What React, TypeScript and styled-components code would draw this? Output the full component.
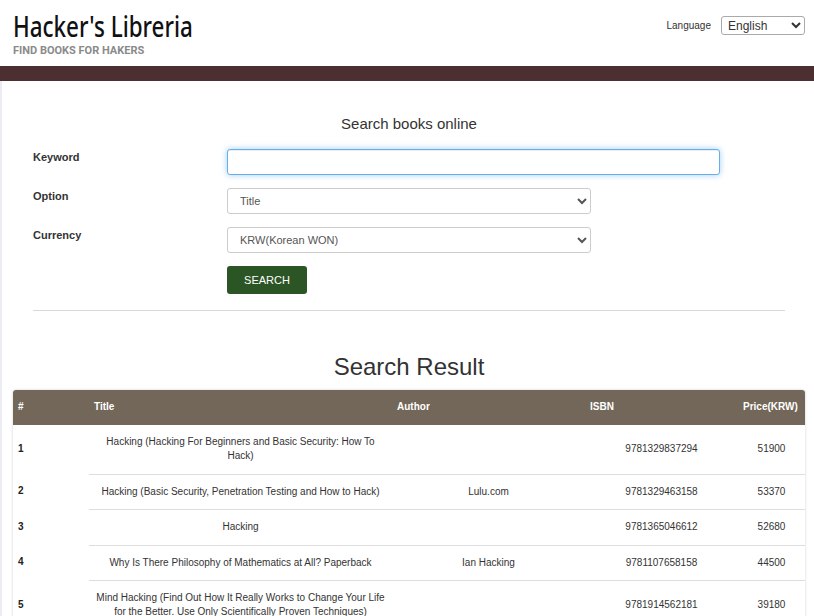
import React from "react";
import styled, { createGlobalStyle } from "styled-components";

const GlobalStyle = createGlobalStyle`
  html, body {
    margin: 0;
    padding: 0;
    background: #ffffff;
  }
  body {
    font-family: "Liberation Sans", Arial, sans-serif;
    color: #333333;
  }
  * {
    box-sizing: border-box;
  }
`;

interface Book {
  title: string;
  author: string;
  isbn: string;
  price: string;
}

const books: Book[] = [
  {
    title: "Hacking (Hacking For Beginners and Basic Security: How To Hack)",
    author: "",
    isbn: "9781329837294",
    price: "51900",
  },
  {
    title: "Hacking (Basic Security, Penetration Testing and How to Hack)",
    author: "Lulu.com",
    isbn: "9781329463158",
    price: "53370",
  },
  { title: "Hacking", author: "", isbn: "9781365046612", price: "52680" },
  {
    title: "Why Is There Philosophy of Mathematics at All? Paperback",
    author: "Ian Hacking",
    isbn: "9781107658158",
    price: "44500",
  },
  {
    title:
      "Mind Hacking (Find Out How It Really Works to Change Your Life for the Better. Use Only Scientifically Proven Techniques)",
    author: "",
    isbn: "9781914562181",
    price: "39180",
  },
];

const Header = styled.header`
  height: 66px;
  padding: 11px 9px 0 13px;
  display: flex;
  justify-content: space-between;
  align-items: flex-start;
`;

const Brand = styled.div`
  display: flex;
  flex-direction: column;
  align-items: flex-start;
`;

// the original face is a condensed sans; squeeze Noto Sans to its width
const Logo = styled.h1`
  margin: 0;
  display: inline-block;
  font-family: "Noto Sans", sans-serif;
  font-size: 28px;
  font-weight: 500;
  line-height: 30px;
  color: #111111;
  transform: scaleX(0.8);
  transform-origin: left center;
`;

const Tagline = styled.div`
  font-family: Roboto, "Liberation Sans", sans-serif;
  font-size: 11px;
  font-weight: 700;
  color: #8a8a8a;
  margin-top: 3px;
`;

const LangBox = styled.div`
  display: flex;
  align-items: center;
  gap: 10px;
  margin-top: 5px;
`;

const LangLabel = styled.span`
  font-size: 10px;
  color: #333333;
`;

const LangSelect = styled.select`
  width: 84px;
  height: 19px;
  font-family: "Liberation Sans", Arial, sans-serif;
  font-size: 12px;
  color: #333333;
  background: #ffffff;
  border: 1px solid #aaaaaa;
  border-radius: 3px;
  padding: 0 2px;
`;

const Bar = styled.div`
  height: 15px;
  background: #4b2f31;
`;

const Main = styled.main`
  border-left: 2px solid #ececf3;
  padding: 33px 9px 40px 11px;
`;

const SearchSection = styled.section`
  padding: 0 20px;
`;

const SectionTitle = styled.h2`
  margin: 0 0 15px;
  text-align: center;
  font-size: 15px;
  font-weight: 400;
  line-height: 20px;
  color: #333333;
`;

const Form = styled.form`
  display: grid;
  grid-template-columns: 194px 1fr;
  row-gap: 13px;
  align-items: start;
`;

const Label = styled.label`
  font-size: 11px;
  font-weight: 700;
  color: #333333;
  padding-top: 2px;
`;

const fieldBase = `
  height: 26px;
  font-family: "Liberation Sans", Arial, sans-serif;
  font-size: 11px;
  color: #555555;
  background: #ffffff;
  border: 1px solid #cccccc;
  border-radius: 3px;
`;

const TextInput = styled.input`
  ${fieldBase}
  width: 493px;
  padding: 0 12px;
  border-color: #66afe9;
  outline: none;
  box-shadow: inset 0 1px 1px rgba(0, 0, 0, 0.075),
    0 0 6px rgba(102, 175, 233, 0.6);
`;

const Select = styled.select`
  ${fieldBase}
  width: 364px;
  padding: 0 8px;
`;

const SearchButton = styled.button`
  grid-column: 2;
  width: 80px;
  height: 28px;
  background: #2c5526;
  color: #ffffff;
  border: none;
  border-radius: 3px;
  font-family: "Liberation Sans", Arial, sans-serif;
  font-size: 11px;
`;

const Rule = styled.hr`
  margin: 16px 0 0;
  border: none;
  border-top: 1px solid #d9d9d9;
`;

const ResultTitle = styled.h2`
  margin: 41px 0 8px;
  text-align: center;
  font-size: 24px;
  font-weight: 400;
  line-height: 30px;
  color: #333333;
`;

const Table = styled.table`
  width: 100%;
  border-collapse: separate;
  border-spacing: 0;
  border-radius: 3px 3px 0 0;
  overflow: hidden;
  box-shadow: 0 0 3px rgba(0, 0, 0, 0.18);
  font-size: 10px;
  line-height: 14px;
`;

const HeadCell = styled.th<{ $w: number }>`
  width: ${(p) => p.$w}px;
  background: #736759;
  color: #ffffff;
  font-weight: 700;
  text-align: left;
  padding: 10px 5px 11px;
`;

const NumCell = styled.td`
  font-weight: 700;
  color: #222222;
  text-align: left;
  padding: 10px 5px 10.5px;
`;

const Cell = styled.td<{ $first: boolean }>`
  text-align: center;
  color: #333333;
  padding: 10px 5px 10.5px;
  border-top: ${(p) => (p.$first ? "none" : "1px solid #dddddd")};
`;

export default function App() {
  return (
    <>
      <GlobalStyle />
      <Header>
        <Brand>
          <Logo>Hacker's Libreria</Logo>
          <Tagline>FIND BOOKS FOR HAKERS</Tagline>
        </Brand>
        <LangBox>
          <LangLabel>Language</LangLabel>
          <LangSelect defaultValue="en">
            <option value="en">English</option>
            <option value="ko">한국어</option>
          </LangSelect>
        </LangBox>
      </Header>
      <Bar />
      <Main>
        <SearchSection>
          <SectionTitle>Search books online</SectionTitle>
          <Form onSubmit={(e) => e.preventDefault()}>
            <Label>Keyword</Label>
            <TextInput type="text" />
            <Label>Option</Label>
            <Select defaultValue="title">
              <option value="title">Title</option>
              <option value="author">Author</option>
              <option value="isbn">ISBN</option>
            </Select>
            <Label>Currency</Label>
            <Select defaultValue="krw">
              <option value="krw">KRW(Korean WON)</option>
              <option value="usd">USD(US Dollar)</option>
            </Select>
            <SearchButton type="submit">SEARCH</SearchButton>
          </Form>
          <Rule />
        </SearchSection>
        <ResultTitle>Search Result</ResultTitle>
        <Table>
          <thead>
            <tr>
              <HeadCell $w={76}>#</HeadCell>
              <HeadCell $w={303}>Title</HeadCell>
              <HeadCell $w={193}>Author</HeadCell>
              <HeadCell $w={153}>ISBN</HeadCell>
              <HeadCell $w={67}>Price(KRW)</HeadCell>
            </tr>
          </thead>
          <tbody>
            {books.map((b, i) => (
              <tr key={b.isbn}>
                <NumCell>{i + 1}</NumCell>
                <Cell $first={i === 0}>{b.title}</Cell>
                <Cell $first={i === 0}>{b.author}</Cell>
                <Cell $first={i === 0}>{b.isbn}</Cell>
                <Cell $first={i === 0}>{b.price}</Cell>
              </tr>
            ))}
          </tbody>
        </Table>
      </Main>
    </>
  );
}
